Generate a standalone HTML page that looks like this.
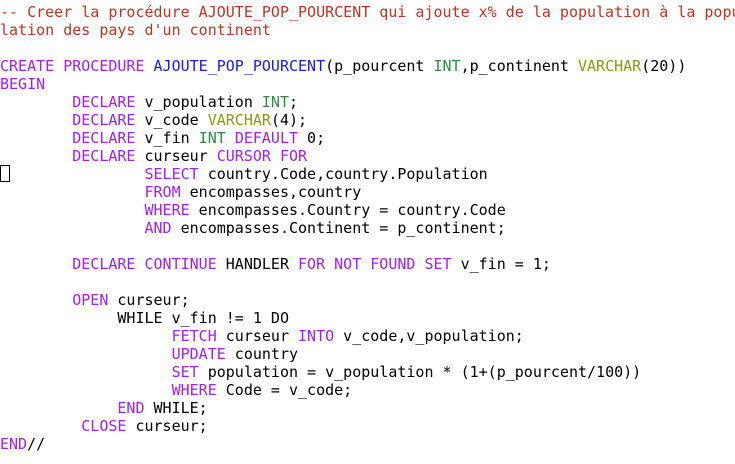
<!DOCTYPE html>
<html><head><meta charset="utf-8"><style>
html,body{margin:0;padding:0;background:#fff;width:735px;height:464px;overflow:hidden}
pre{margin:0;position:absolute;left:0;top:3px;font-family:"DejaVu Sans Mono","Liberation Mono",monospace;font-size:15px;line-height:18px;color:#000;white-space:pre}
.c{color:#bc3424}.k{color:#a020f0}.f{color:#1a1ae0}.t{color:#2e8b40}.v{color:#8a9a10}
.cur{position:absolute;left:0;top:165px;width:10px;height:17px;border:1px solid #000;box-sizing:border-box}
</style></head><body>
<pre><span class="c">-- Creer la procédure AJOUTE_POP_POURCENT qui ajoute x% de la population à la popu
lation des pays d'un continent</span>

<span class="k">CREATE PROCEDURE</span> <span class="f">AJOUTE_POP_POURCENT</span>(p_pourcent <span class="t">INT</span>,p_continent <span class="v">VARCHAR</span>(20))
<span class="k">BEGIN</span>
        <span class="k">DECLARE</span> v_population <span class="t">INT</span>;
        <span class="k">DECLARE</span> v_code <span class="v">VARCHAR</span>(4);
        <span class="k">DECLARE</span> v_fin <span class="t">INT</span> <span class="k">DEFAULT</span> 0;
        <span class="k">DECLARE</span> curseur <span class="k">CURSOR FOR</span>
                <span class="k">SELECT</span> country.Code,country.Population
                <span class="k">FROM</span> encompasses,country
                <span class="k">WHERE</span> encompasses.Country = country.Code
                <span class="k">AND</span> encompasses.Continent = p_continent;

        <span class="k">DECLARE CONTINUE</span> HANDLER <span class="k">FOR NOT FOUND SET</span> v_fin = 1;

        <span class="k">OPEN</span> curseur;
             WHILE v_fin != 1 DO
                   <span class="k">FETCH</span> curseur <span class="k">INTO</span> v_code,v_population;
                   <span class="k">UPDATE</span> country
                   <span class="k">SET</span> population = v_population * (1+(p_pourcent/100))
                   <span class="k">WHERE</span> Code = v_code;
             <span class="k">END</span> WHILE;
         <span class="k">CLOSE</span> curseur;
<span class="k">END</span>//</pre>
<div class="cur"></div>
</body></html>
